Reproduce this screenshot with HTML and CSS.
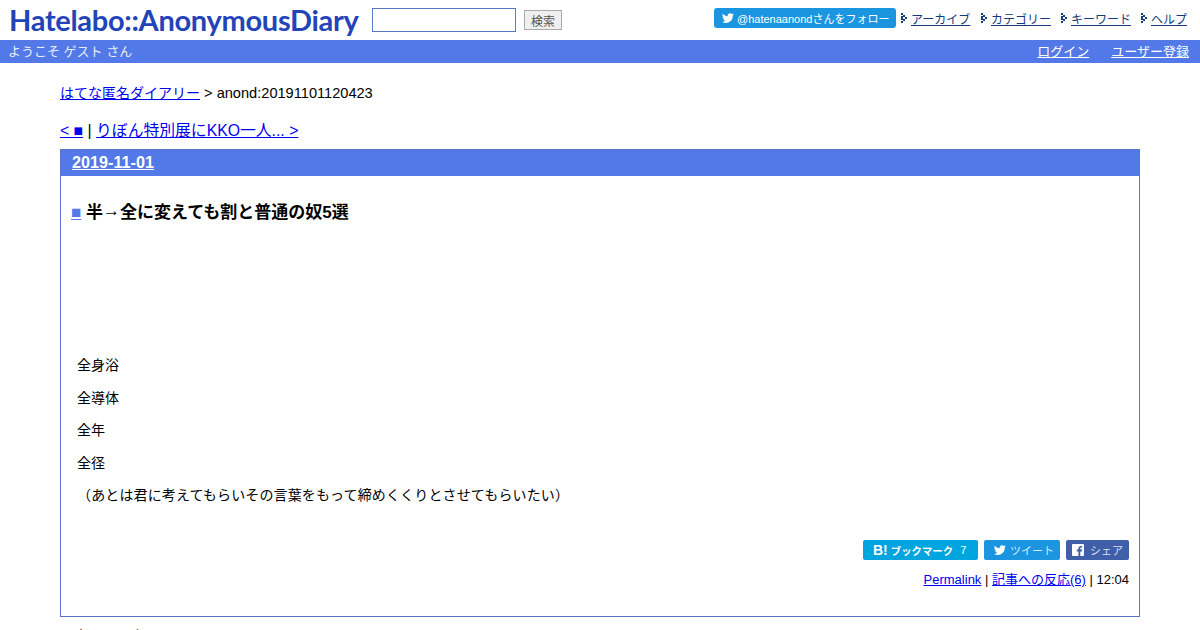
FILE: index.html
```html
<!DOCTYPE html>
<html lang="ja">
<head>
<meta charset="utf-8">
<title>はてな匿名ダイアリー</title>
<link rel="stylesheet" href="styles.css">
</head>
<body>
<header class="top">
  <div class="top-left">
    <a class="logo">Hatelabo::AnonymousDiary</a>
    <form class="search">
      <input class="search-input" type="text">
      <button class="search-btn" type="button">検索</button>
    </form>
  </div>
  <nav class="top-nav">
    <a class="follow"><svg class="tw" viewBox="0 0 24 24"><path d="M23.6 4.6c-.9.4-1.8.7-2.8.8 1-.6 1.8-1.5 2.1-2.7-.9.6-2 1-3.1 1.2A4.9 4.9 0 0 0 11.500 8.400C7.500 8.200 3.900 6.300 1.500 3.300c-1.300 2.200-.6 5.100 1.500 6.500-.8 0-1.500-.2-2.200-.6 0 2.300 1.600 4.400 3.900 4.900-.7.200-1.500.2-2.200.1.600 2 2.400 3.400 4.600 3.400A9.900 9.900 0 0 1 0 19.600 14 14 0 0 0 21.500 7.100c1-.7 1.800-1.500 2.100-2.500z"/></svg>@hatenaanondさんをフォロー</a>
    <a class="nav-link"><svg class="arrow" viewBox="0 0 7 10"><path d="M0 0h2v2H0zM2 2h2v2H2zM4 4h2v2H4zM2 6h2v2H2zM0 8h2v2H0zM0 3h2v4H0z"/></svg><span>アーカイブ</span></a>
    <a class="nav-link"><svg class="arrow" viewBox="0 0 7 10"><path d="M0 0h2v2H0zM2 2h2v2H2zM4 4h2v2H4zM2 6h2v2H2zM0 8h2v2H0zM0 3h2v4H0z"/></svg><span>カテゴリー</span></a>
    <a class="nav-link"><svg class="arrow" viewBox="0 0 7 10"><path d="M0 0h2v2H0zM2 2h2v2H2zM4 4h2v2H4zM2 6h2v2H2zM0 8h2v2H0zM0 3h2v4H0z"/></svg><span>キーワード</span></a>
    <a class="nav-link nav-last"><svg class="arrow" viewBox="0 0 7 10"><path d="M0 0h2v2H0zM2 2h2v2H2zM4 4h2v2H4zM2 6h2v2H2zM0 8h2v2H0zM0 3h2v4H0z"/></svg><span>ヘルプ</span></a>
  </nav>
</header>
<div class="welcome">
  <span>ようこそ ゲスト さん</span>
  <span class="welcome-links"><a>ログイン</a><a>ユーザー登録</a></span>
</div>
<main class="main">
  <p class="crumb"><a href="#">はてな匿名ダイアリー</a><span class="crumb-tail"> &gt; anond:20191101120423</span></p>
  <p class="pager"><a href="#">&lt; ■</a> | <a href="#">りぼん特別展にKKO一人... &gt;</a></p>
  <section class="day">
    <h2 class="day-title"><a>2019-11-01</a></h2>
    <div class="day-body">
      <h3 class="entry-title"><a class="sq">■</a> 半<span class="arrow-ch">→</span>全に変えても割と普通の奴5選</h3>
      <div class="entry">
        <p>全身浴</p>
        <p>全導体</p>
        <p>全年</p>
        <p>全径</p>
        <p class="entry-long">（あとは君に考えてもらいその言葉をもって締めくくりとさせてもらいたい）</p>
      </div>
      <div class="share">
        <a class="btn btn-hb"><b class="hb-mark">B!</b><b class="hb-word">ブックマーク</b><span class="hb-count">7</span></a>
        <a class="btn btn-tw"><svg class="tw-s" viewBox="0 0 24 24"><path d="M23.6 4.6c-.9.4-1.800.7-2.800.8 1-.6 1.800-1.500 2.100-2.700-.9.6-2 1-3.100 1.200A4.900 4.900 0 0 0 11.500 8.400C7.500 8.200 3.900 6.300 1.500 3.300c-1.300 2.200-.6 5.100 1.500 6.500-.8 0-1.500-.2-2.200-.6 0 2.300 1.600 4.400 3.900 4.900-.7.200-1.500.2-2.200.1.600 2 2.400 3.400 4.600 3.400A9.900 9.900 0 0 1 0 19.600 14 14 0 0 0 21.500 7.100c1-.7 1.800-1.500 2.100-2.500z"/></svg>ツイート</a>
        <a class="btn btn-fb"><svg class="fb" viewBox="0 0 12 12"><path d="M1 0h10a1 1 0 0 1 1 1v10a1 1 0 0 1-1 1H8.300V7.400h1.600l.2-1.800H8.300V4.500c0-.5.200-.9.900-.9h1V2c-.3 0-.8-.1-1.300-.1-1.500 0-2.500.9-2.500 2.500v1.200H4.800v1.800h1.600V12H1a1 1 0 0 1-1-1V1a1 1 0 0 1 1-1z"/></svg>シェア</a>
      </div>
      <p class="foot"><a href="#">Permalink</a> | <a href="#">記事への反応(6)</a> | 12:04</p>
    </div>
  </section>
  <p class="below">記事への反応</p>
</main>
</body>
</html>
```
FILE: styles.css
```css
html, body { margin: 0; padding: 0; height: 630px; overflow: hidden; }
body { font-family: "Liberation Sans", "Noto Sans CJK JP", sans-serif; font-size: 14px; color: #000; background: #fff; }
a[href] { color: #0000ee; }
.top { height: 40px; display: flex; justify-content: space-between; align-items: flex-start; }
.top-left { display: flex; align-items: flex-start; padding-left: 9px; }
.logo { font-family: "Lato", sans-serif; font-weight: 700; font-size: 29px; line-height: 39px; color: #2244b8; width: 350px; white-space: nowrap; letter-spacing: -0.3px; }
.search { display: flex; align-items: center; gap: 8px; margin-left: 13px; padding-top: 8px; }
.search-input { box-sizing: border-box; width: 144px; height: 24px; border: 1px solid #5a78c8; padding: 0; background: #fff; }
.search-btn { box-sizing: border-box; width: 38px; height: 20px; border: 1px solid #aaa; background: #efefef; color: #555; font: 12px "Liberation Sans", "Noto Sans CJK JP", sans-serif; padding: 0; }
.top-nav { display: flex; align-items: center; padding: 8px 13px 0 0; height: 20px; }
.follow { display: flex; align-items: center; box-sizing: border-box; width: 182px; height: 20px; margin-right: 5px; padding-left: 7px; border-radius: 3px; background: #1b95e0; color: #fff; font-size: 11px; white-space: nowrap; }
.tw { width: 14px; height: 12px; fill: #fff; margin-right: 2px; }
.nav-link { display: flex; align-items: center; width: 80px; color: #143a78; font-size: 12px; }
.nav-last { width: 46px; }
.nav-link span { text-decoration: underline; }
.arrow { width: 7px; height: 10px; fill: #143a78; margin-right: 3px; }
.welcome { height: 23px; display: flex; justify-content: space-between; align-items: center; box-sizing: border-box; padding: 0 11px 2px 8px; background: #5279e7; color: #e8edfb; font-size: 13px; }
.welcome-links { display: flex; gap: 22px; }
.welcome-links a { color: #fff; text-decoration: underline; }
.main { padding: 0 60px; }
.crumb { margin: 0; padding-top: 22px; line-height: 17px; height: 29px; }
.crumb-tail { font-size: 14.6px; }
.pager { margin: 0; padding-top: 7px; font-size: 15.8px; line-height: 19px; height: 28px; }
.day { border: 1px solid #5a73c9; height: 468px; box-sizing: border-box; }
.day-title { margin: 0; height: 26px; padding-left: 11px; background: #5279e7; font-size: 16.2px; line-height: 24px; }
.day-title a { color: #fff; text-decoration: underline; }
.day-body { padding: 0 10px; }
.entry-title { margin: 0; padding-top: 27px; font-size: 17px; line-height: 20px; height: 134px; box-sizing: border-box; }
.arrow-ch { font-weight: 400; vertical-align: 2px; line-height: 0; }
.sq { color: #5279e7; text-decoration: underline; }
.entry { padding: 47px 6px 0; height: 231px; box-sizing: border-box; }
.entry p { margin: 0 0 15px; line-height: 17.5px; }
.entry .entry-long { letter-spacing: 0.14px; }
.share { display: flex; justify-content: flex-end; gap: 6px; height: 20px; margin-top: -1px; }
.btn { display: flex; align-items: center; box-sizing: border-box; height: 20px; border-radius: 2px; color: #fff; font-size: 11px; }
.btn-hb { width: 115px; padding-left: 10px; background: #00a4de; }
.hb-mark { font-size: 14px; }
.hb-word { font-size: 10.4px; margin-left: 3px; }
.hb-count { margin-left: 7px; }
.btn-tw { width: 76px; padding-left: 9px; background: #1b95e0; color: #d8ecfa; }
.tw-s { width: 14px; height: 12px; fill: #fff; margin-right: 3px; }
.btn-fb { width: 63px; padding-left: 6px; background: #3f5fa8; color: #d8e0f0; }
.fb { width: 12px; height: 12px; fill: #fff; margin-right: 6px; }
.foot { margin: 11px 0 0; text-align: right; font-size: 13px; line-height: 18px; }
.below { margin: 0; padding-top: 11px; line-height: 17px; }
```
